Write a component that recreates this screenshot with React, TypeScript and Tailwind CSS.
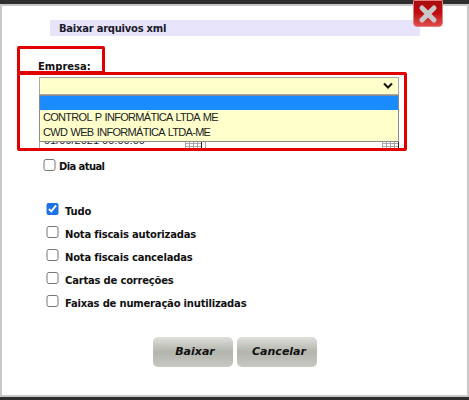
import React from 'react';

const FONT = "font-['DejaVu_Sans',sans-serif]";

const options = [
  { label: 'Tudo', checked: true },
  { label: 'Nota fiscais autorizadas', checked: false },
  { label: 'Nota fiscais canceladas', checked: false },
  { label: 'Cartas de correções', checked: false },
  { label: 'Faixas de numeração inutilizadas', checked: false },
];

function CloseButton() {
  return (
    <div className="absolute left-[413px] top-0 flex h-[27px] w-[30px] items-center justify-center rounded-b-[4px] border border-[#e98080] bg-gradient-to-b from-[#a80c10] via-[#c00c10] to-[#e04a4c]">
      <svg width="20" height="20" viewBox="0 0 20 20">
        <path d="M4 4 L16 16 M16 4 L4 16" stroke="#c9c9c9" strokeWidth="5" strokeLinecap="round" />
      </svg>
    </div>
  );
}

function CalendarIcon() {
  return (
    <svg width="17" height="20" viewBox="0 0 17 20" className="shrink-0">
      <path
        d="M0.5 12.5H16.5M0.5 15.5H16.5M0.5 18.5H16.5M0.5 12V20M4.5 12V20M8.5 12V20M12.5 12V20"
        stroke="#a8a8a8"
        fill="none"
      />
      <path d="M16.5 12V20" stroke="#222" />
      <path d="M13 12.5H15" stroke="#8a1c1c" />
    </svg>
  );
}

export default function App() {
  return (
    <div className={`relative flex h-[400px] w-[469px] flex-col overflow-hidden bg-[#2e2e2e] pt-[4px] ${FONT}`}>
      <div className="flex h-[393px] flex-col border-2 border-[#c8c8c8] bg-white">
        <div className="ml-[48px] mt-[14px] flex h-[16px] w-[370px] items-center bg-[#e6e3fb] pl-[9px] text-[10px] font-bold tracking-[-0.25px] text-[#1a1a2a]">
          Baixar arquivos xml
        </div>
        <div className="ml-[36px] mt-[24px] text-[10px] font-bold leading-[13px] text-[#111]">Empresa:</div>

        <div className="ml-[37px] mt-[4px] flex h-[18px] w-[360px] items-center justify-end border border-[#a9a9a9] bg-[#ffffcc] pr-[4px]">
          <svg width="12" height="8" viewBox="0 0 12 8">
            <path d="M2 1.5 L6 5.5 L10 1.5" fill="none" stroke="#111" strokeWidth="2" />
          </svg>
        </div>

        {/* datas, quase todas cobertas pela lista aberta */}
        <div className="ml-[37px] mt-[33px] flex h-[20px] w-[360px] gap-[3px]">
          <div className="flex w-[163px] items-end justify-between border-l border-[#a9a9a9] text-[11px] leading-[13px] text-[#222]">
            <span className="pb-[1px] pl-[4px] font-['Liberation_Sans',sans-serif]">01/09/2021 00:00:00</span>
            <CalendarIcon />
          </div>
          <div className="flex flex-1 items-end justify-end border-l border-[#a9a9a9]">
            <CalendarIcon />
          </div>
        </div>

        <label className="ml-[41px] mt-[10px] flex h-[13px] items-center gap-[3px] text-[10px] font-bold tracking-[-0.6px] text-[#111]">
          <input type="checkbox" readOnly className="m-0 h-[12px] w-[13px]" />
          <span className="pt-[3px]">Dia atual</span>
        </label>

        <div className="ml-[44px] mt-[32px] flex flex-col gap-[10px]">
          {options.map((o) => (
            <label key={o.label} className="flex h-[13px] items-start gap-[6px] text-[10px] font-bold tracking-[-0.2px] text-[#111]">
              <input
                type="checkbox"
                readOnly
                checked={o.checked}
                className="m-0 h-[12px] w-[13px] accent-[#1a73e8]"
              />
              <span className="pt-[2px] leading-[14px]">{o.label}</span>
            </label>
          ))}
        </div>

        <div className="ml-[151px] mt-[29px] flex gap-[4px]">
          <button className="h-[30px] w-[80px] rounded-[5px] bg-gradient-to-b from-[#dfdfdb] via-[#b4b4ae] to-[#c8c8c2] pl-[4px] text-[11px] font-bold italic text-[#111]">
            Baixar
          </button>
          <button className="h-[30px] w-[80px] rounded-[5px] bg-gradient-to-b from-[#dfdfdb] via-[#b4b4ae] to-[#c8c8c2] pl-[4px] text-[11px] font-bold italic text-[#111]">
            Cancelar
          </button>
        </div>
      </div>

      {/* lista aberta do select */}
      <div className="absolute left-[39px] top-[95px] h-[47px] w-[360px] border border-[#8a8a8a] bg-[#ffffcc] font-['Liberation_Sans',sans-serif] text-[11px] tracking-[-0.7px] [word-spacing:1px] text-[#222]">
        <div className="h-[14px] bg-[#1a8cff]" />
        <div className="flex h-[15px] items-center pl-[3px]">CONTROL P INFORMÁTICA LTDA ME</div>
        <div className="flex h-[15px] items-center pl-[3px]">CWD WEB INFORMÁTICA LTDA-ME</div>
      </div>

      {/* marcacoes vermelhas */}
      <div className="absolute left-[17px] top-[46px] h-[28px] w-[88px] rounded-[2px] border-[3px] border-[#e00000]" />
      <div className="absolute left-[17px] top-[72px] h-[79px] w-[390px] rounded-[2px] border-[3px] border-[#e00000]" />

      <CloseButton />
    </div>
  );
}
